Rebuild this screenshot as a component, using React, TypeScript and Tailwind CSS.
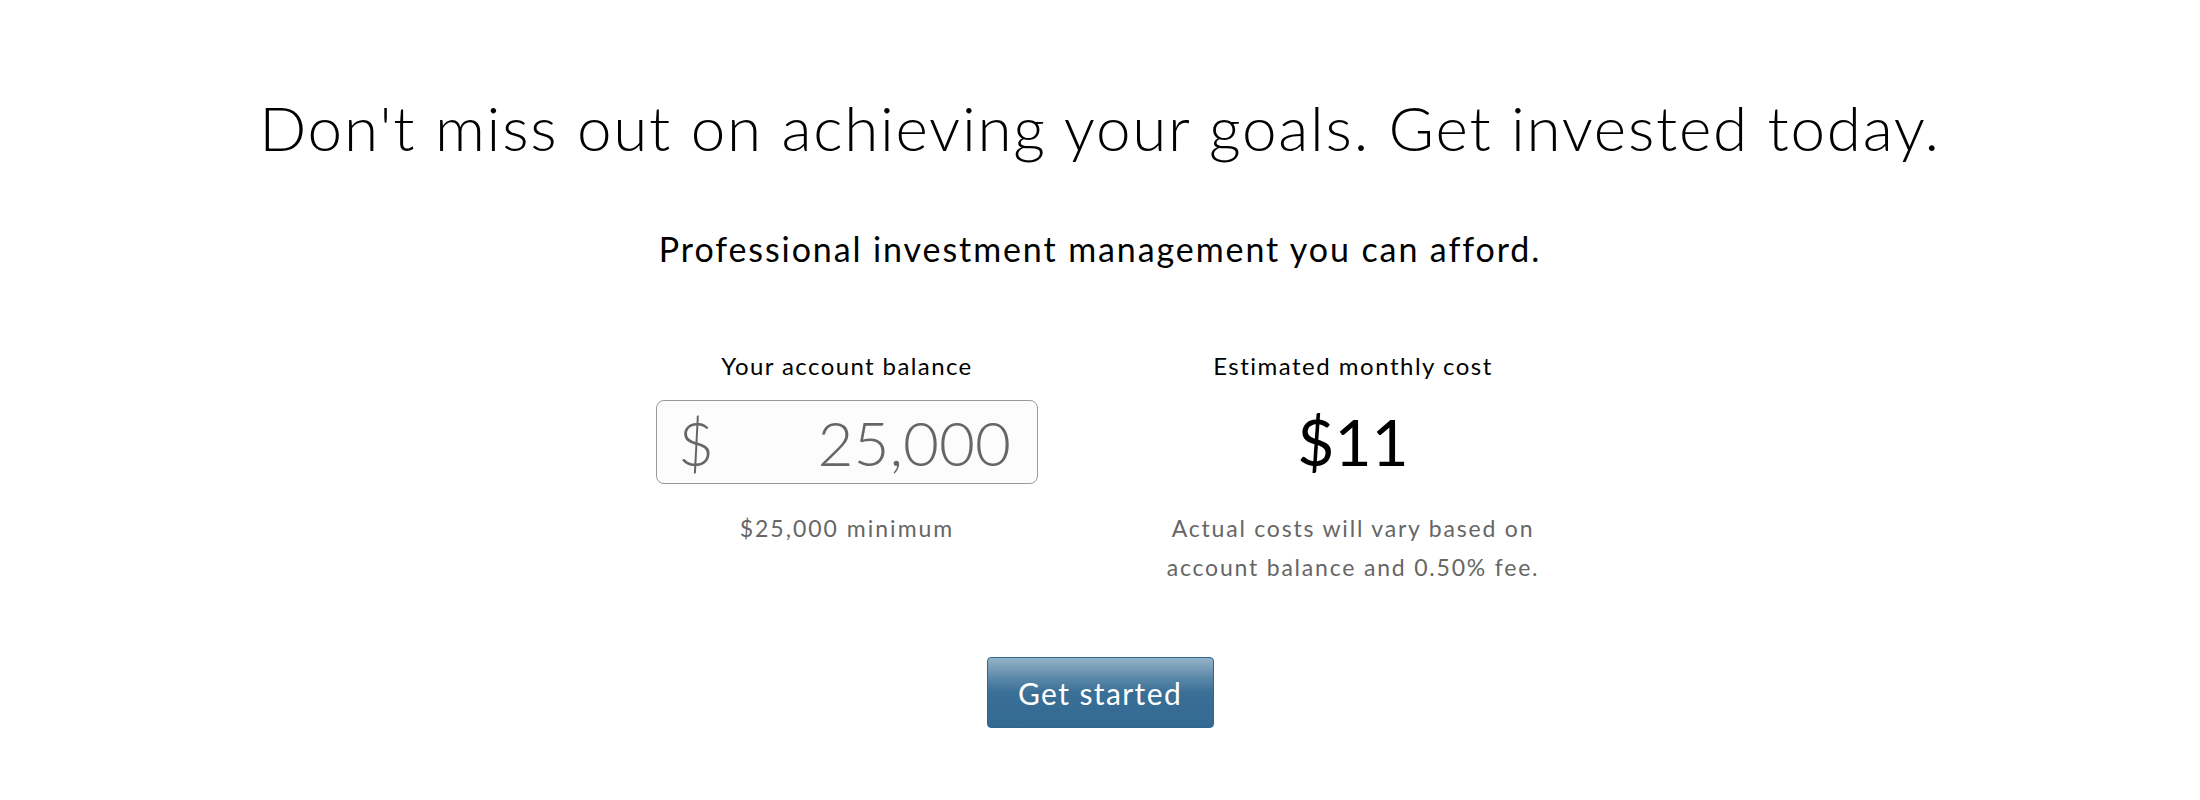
import { useState } from "react";

const FEE_RATE = 0.005;

const formatBalance = (value: number) => value.toLocaleString("en-US");

const App = () => {
	const [balance] = useState<number>(25000);
	const monthlyCost = Math.ceil((balance * FEE_RATE) / 12);

	return (
		<div className="min-h-[800px] w-full bg-white text-black font-['Lato','Noto_Sans',sans-serif]">
			<div className="flex flex-col items-center pt-[96px]">
				<h1 className="text-[62px] leading-none font-light tracking-[1.75px]">
					Don't miss out on achieving your goals. Get invested today.
				</h1>
				<p className="mt-[74px] text-[34px] leading-none tracking-[1.9px]">
					Professional investment management you can afford.
				</p>

				<div className="mt-[88px] grid grid-cols-[460px_460px] gap-[46px]">
					{/* balance */}
					<div className="flex flex-col items-center">
						<div className="text-[24px] leading-none tracking-[1.4px]">
							Your account balance
						</div>
						<div className="mt-[22px] flex h-[84px] w-[382px] items-center justify-between rounded-[8px] border border-[#9a9a9a] bg-[#fcfcfc] pl-[21px] pr-[26px] text-[62px] font-light leading-none text-[#666666]">
							<span>$</span>
							<span>{formatBalance(balance)}</span>
						</div>
						<div className="mt-[29px] text-[23px] leading-[30px] tracking-[2px] text-[#666666]">
							$25,000 minimum
						</div>
					</div>

					{/* cost */}
					<div className="flex flex-col items-center">
						<div className="text-[24px] leading-none tracking-[1.5px]">
							Estimated monthly cost
						</div>
						<div className="mt-[22px] flex h-[84px] items-center text-[64px] leading-none">
							${monthlyCost}
						</div>
						<div className="mt-[25px] text-center text-[23px] leading-[39px] tracking-[1.8px] text-[#666666]">
							Actual costs will vary based on
							<br />
							account balance and 0.50% fee.
						</div>
					</div>
				</div>

				<button className="mt-[70px] h-[71px] w-[227px] rounded-[4px] border border-[#2d6690] bg-[linear-gradient(to_bottom,#95b3c9_0%,#5a87a8_30%,#3a6f96_50%,#336a93_100%)] text-[30px] leading-none tracking-[1.4px] text-white">
					Get started
				</button>
			</div>
		</div>
	);
};

export default App;
